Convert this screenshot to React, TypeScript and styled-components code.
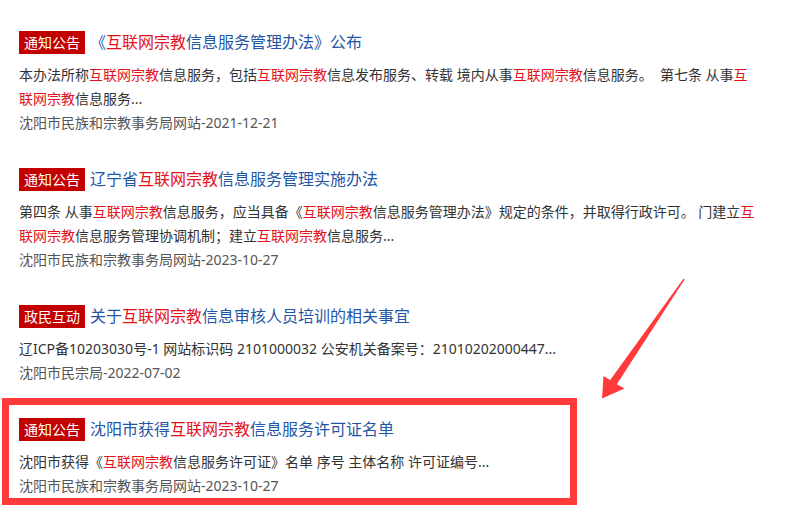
import React from "react"
import styled, { createGlobalStyle, css } from "styled-components"

const GlobalStyle = createGlobalStyle`
  html, body {
    margin: 0;
    padding: 0;
    background: #ffffff;
  }
  body {
    font-family: "Noto Sans", "Noto Sans CJK SC", "Microsoft YaHei", sans-serif;
  }
`

const Page = styled.div`
  position: relative;
  width: 791px;
  height: 510px;
  overflow: hidden;
  background: #fff;
`

const List = styled.div`
  width: 757px;
  padding-top: 30px;
`

const Item = styled.div<{ $highlight?: boolean }>`
  padding-left: 19px;
  margin-top: 32px;
  &:first-child {
    margin-top: 0;
  }
  ${(p) =>
    p.$highlight &&
    css`
      box-sizing: border-box;
      width: 575px;
      margin: 13px 0 0 2px;
      padding: 12px 0 0 10px;
      border: 7px solid #ff3a3a;
    `}
`

const TitleRow = styled.div`
  display: flex;
  align-items: center;
  height: 24px;
  gap: 5px;
`

const Badge = styled.span`
  display: inline-block;
  height: 23px;
  line-height: 23px;
  padding: 0 5px;
  background: #c20000;
  color: #fff;
  font-size: 14px;
  white-space: nowrap;
`

const Title = styled.a`
  font-size: 16px;
  line-height: 24px;
  color: #1f56a6;
  text-decoration: none;
  white-space: nowrap;
`

const Kw = styled.span`
  color: #e2111b;
`

const Desc = styled.p`
  margin: 9px 0 0;
  font-size: 14px;
  line-height: 24px;
  color: #333;
  white-space: nowrap;
`

const Source = styled.div`
  font-size: 14px;
  line-height: 24px;
  color: #555;
`

const Arrow = styled.svg`
  position: absolute;
  left: 0;
  top: 0;
  pointer-events: none;
`

const K = "互联网宗教"

const App: React.FC = () => {
  return (
    <Page>
      <GlobalStyle />
      <List>
        <Item>
          <TitleRow>
            <Badge>通知公告</Badge>
            <Title>《<Kw>{K}</Kw>信息服务管理办法》公布</Title>
          </TitleRow>
          <Desc>
            本办法所称<Kw>{K}</Kw>信息服务，包括<Kw>{K}</Kw>信息发布服务、转载 境内从事<Kw>{K}</Kw>信息服务。 &nbsp;第七条 从事<Kw>互<br />联网宗教</Kw>信息服务...
          </Desc>
          <Source>沈阳市民族和宗教事务局网站-2021-12-21</Source>
        </Item>

        <Item>
          <TitleRow>
            <Badge>通知公告</Badge>
            <Title>辽宁省<Kw>{K}</Kw>信息服务管理实施办法</Title>
          </TitleRow>
          <Desc>
            第四条 从事<Kw>{K}</Kw>信息服务，应当具备《<Kw>{K}</Kw>信息服务管理办法》规定的条件，并取得行政许可。 门建立<Kw>互<br />联网宗教</Kw>信息服务管理协调机制；建立<Kw>{K}</Kw>信息服务...
          </Desc>
          <Source>沈阳市民族和宗教事务局网站-2023-10-27</Source>
        </Item>

        <Item>
          <TitleRow>
            <Badge>政民互动</Badge>
            <Title>关于<Kw>{K}</Kw>信息审核人员培训的相关事宜</Title>
          </TitleRow>
          <Desc>辽ICP备10203030号-1 网站标识码 2101000032 公安机关备案号：21010202000447...</Desc>
          <Source>沈阳市民宗局-2022-07-02</Source>
        </Item>

        <Item $highlight>
          <TitleRow>
            <Badge>通知公告</Badge>
            <Title>沈阳市获得<Kw>{K}</Kw>信息服务许可证名单</Title>
          </TitleRow>
          <Desc>
            沈阳市获得《<Kw>{K}</Kw>信息服务许可证》名单 序号 主体名称 许可证编号...
          </Desc>
          <Source>沈阳市民族和宗教事务局网站-2023-10-27</Source>
        </Item>
      </List>

      <Arrow width="791" height="510" viewBox="0 0 791 510">
        <polygon
          fill="#ff3a3a"
          points="684.6,279.4 616.8,384.2 624.5,388.5 602,398.5 603.5,376 610.2,380 683.6,278.6"
        />
      </Arrow>
    </Page>
  )
}

export default App
